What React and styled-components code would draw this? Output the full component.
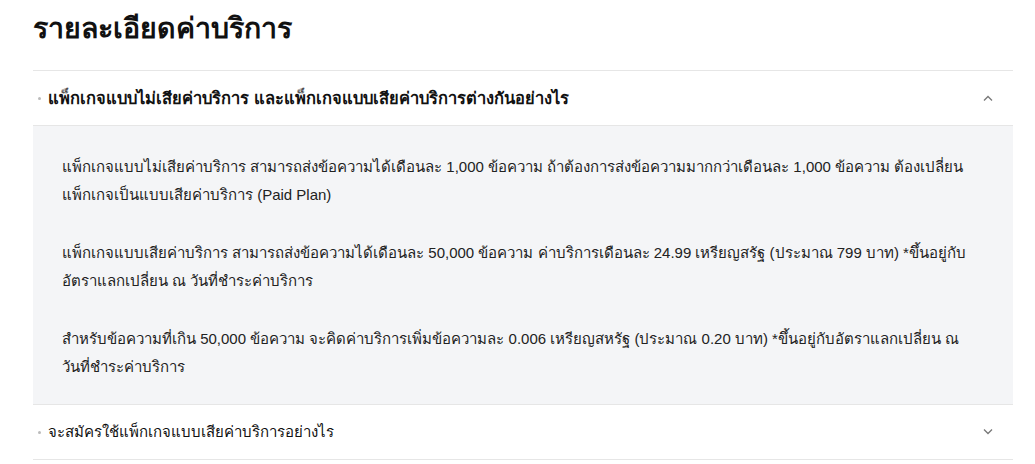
import React, { useState } from 'react'
import styled, { createGlobalStyle } from 'styled-components'

const GlobalStyle = createGlobalStyle`
  body {
    margin: 0;
    background: #fff;
    font-family: Tahoma, "Liberation Sans", "Noto Sans", sans-serif;
    color: #111;
  }
`

const Page = styled.div`
  padding: 12px 22px 0 33px;
`

const Title = styled.h1`
  margin: 0 0 26px;
  font-size: 28.5px;
  font-weight: 700;
  line-height: 32px;
  color: #111;
`

const List = styled.div`
  border-top: 1px solid #e6e6e6;
`

const Item = styled.div`
  border-bottom: 1px solid #e6e6e6;
`

const Question = styled.button`
  display: flex;
  align-items: center;
  width: 100%;
  height: 54px;
  padding: 0 20px 0 5px;
  border: 0;
  background: #fff;
  cursor: pointer;
  font-family: inherit;
  font-size: ${p => (p.$open ? '16.5px' : '15px')};
  font-weight: ${p => (p.$open ? 700 : 400)};
  color: #111;
  text-align: left;
`

const Dot = styled.span`
  width: 3px;
  height: 3px;
  border-radius: 50%;
  background: #bbb;
  margin-right: 7px;
  flex-shrink: 0;
`

const QText = styled.span`
  flex: 1;
`

const Answer = styled.div`
  background: #f4f5f7;
  padding: 27px 29px 23px;
  border-top: 1px solid #e6e6e6;
`

const Para = styled.p`
  margin: 0 0 30px;
  font-size: 15px;
  line-height: 28px;
  color: #222;
  &:last-child {
    margin-bottom: 0;
  }
`

const Keep = styled.span`
  white-space: nowrap;
`

const Chevron = ({ up }) => (
  <svg width="10" height="6" viewBox="0 0 10 6" fill="none">
    <path
      d={up ? 'M1 5.5 L5 1.5 L9 5.5' : 'M1 0.5 L5 4.5 L9 0.5'}
      stroke="#777"
      strokeWidth="1.3"
    />
  </svg>
)

const faqs = [
  {
    q: 'แพ็กเกจแบบไม่เสียค่าบริการ และแพ็กเกจแบบเสียค่าบริการต่างกันอย่างไร',
    a: [
      <>แพ็กเกจแบบไม่เสียค่าบริการ สามารถส่งข้อความได้เดือนละ 1,000 ข้อความ ถ้าต้องการส่งข้อความมากกว่าเดือนละ 1,000 ข้อความ ต้องเปลี่ยน<Keep>แพ็กเกจเป็นแบบเสียค่าบริการ</Keep> (Paid Plan)</>,
      <>แพ็กเกจแบบเสียค่าบริการ สามารถส่งข้อความได้เดือนละ 50,000 ข้อความ ค่าบริการเดือนละ 24.99 เหรียญสรัฐ (ประมาณ 799 บาท) *ขึ้นอยู่กับ<Keep>อัตราแลกเปลี่ยน</Keep> ณ <Keep>วันที่ชำระค่าบริการ</Keep></>,
      <>สำหรับข้อความที่เกิน 50,000 ข้อความ จะคิดค่าบริการเพิ่มข้อความละ 0.006 เหรียญสหรัฐ (ประมาณ 0.20 บาท) *ขึ้นอยู่กับอัตราแลกเปลี่ยน ณ <Keep>วันที่ชำระค่าบริการ</Keep></>,
    ],
  },
  {
    q: 'จะสมัครใช้แพ็กเกจแบบเสียค่าบริการอย่างไร',
    a: ['ไปที่หน้าตั้งค่าบัญชี แล้วเลือกเปลี่ยนแพ็กเกจเป็นแบบเสียค่าบริการ'],
  },
]

export default function App() {
  const [open, setOpen] = useState(0)
  return (
    <Page>
      <GlobalStyle />
      <Title>รายละเอียดค่าบริการ</Title>
      <List>
        {faqs.map((f, i) => (
          <Item key={i}>
            <Question $open={open === i} onClick={() => setOpen(open === i ? -1 : i)}>
              <Dot />
              <QText>{f.q}</QText>
              <Chevron up={open === i} />
            </Question>
            {open === i && (
              <Answer>
                {f.a.map((t, j) => (
                  <Para key={j}>{t}</Para>
                ))}
              </Answer>
            )}
          </Item>
        ))}
      </List>
    </Page>
  )
}
